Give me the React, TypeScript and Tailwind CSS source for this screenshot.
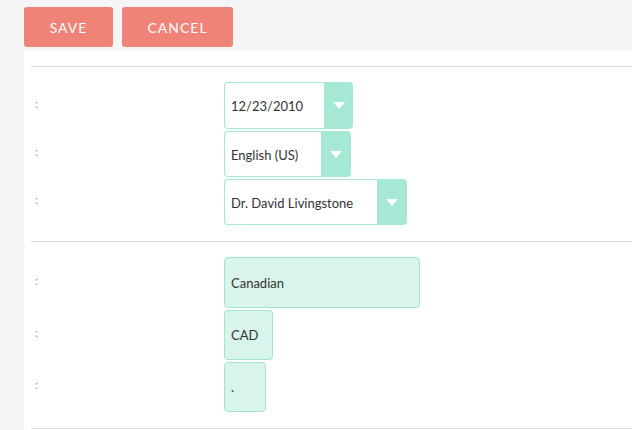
import React from "react";

const Arrow = () => (
  <svg width="12" height="7" viewBox="0 0 12 7">
    <polygon points="0,0 12,0 6,7" fill="#ffffff" />
  </svg>
);

function SelectBox({ value, textW, arrowW, h }: { value: string; textW: number; arrowW: number; h: number }) {
  return (
    <div className="flex" style={{ height: h }}>
      <div
        className="flex items-center rounded-l-[4px] border border-r-0 border-[#a5e8d6] bg-white pl-[6px] pt-[3px] text-[13px] text-[#333]"
        style={{ width: textW }}
      >
        {value}
      </div>
      <div
        className="flex items-center justify-center rounded-r-[4px] bg-[#a5e8d6]"
        style={{ width: arrowW }}
      >
        <Arrow />
      </div>
    </div>
  );
}

function TextBox({ value, w, h }: { value: string; w: number; h: number }) {
  return (
    <div
      className="flex items-center rounded-[4px] border border-[#a5e3d1] bg-[#d8f5ec] pl-[6px] pt-[2px] text-[13px] text-[#333]"
      style={{ width: w, height: h }}
    >
      {value}
    </div>
  );
}

function Row({ children }: { children: React.ReactNode }) {
  return (
    <div className="flex items-center">
      <div className="w-[193px] pb-[4px] pl-[4px] text-[12px] text-[#999]">:</div>
      {children}
    </div>
  );
}

export default function App() {
  return (
    <div
      className="h-[430px] w-[632px] overflow-hidden bg-[#f5f5f5]"
      style={{ fontFamily: "Lato, 'Open Sans', sans-serif" }}
    >
      <div className="flex gap-[9px] pl-[24px] pt-[7px]">
        <button className="h-[40px] w-[89px] rounded-[3px] bg-[#f08377] text-[14px] tracking-[1px] text-white">
          SAVE
        </button>
        <button className="h-[40px] w-[111px] rounded-[3px] bg-[#f08377] text-[14px] tracking-[1px] text-white">
          CANCEL
        </button>
      </div>
      <div className="ml-[24px] mt-[4px] h-[400px] bg-white pl-[7px] pt-[15px]">
        <div className="flex flex-col gap-[2px] border-t border-[#ddd] pb-[16px] pt-[15px]">
          <Row>
            <SelectBox value="12/23/2010" textW={100} arrowW={29} h={47} />
          </Row>
          <Row>
            <SelectBox value="English (US)" textW={97} arrowW={30} h={46} />
          </Row>
          <Row>
            <SelectBox value="Dr. David Livingstone" textW={153} arrowW={30} h={46} />
          </Row>
        </div>
        <div className="flex flex-col gap-[2px] border-t border-b border-[#ddd] pb-[16px] pt-[15px]">
          <Row>
            <TextBox value="Canadian" w={196} h={51} />
          </Row>
          <Row>
            <TextBox value="CAD" w={49} h={50} />
          </Row>
          <Row>
            <TextBox value="." w={42} h={50} />
          </Row>
        </div>
      </div>
    </div>
  );
}
